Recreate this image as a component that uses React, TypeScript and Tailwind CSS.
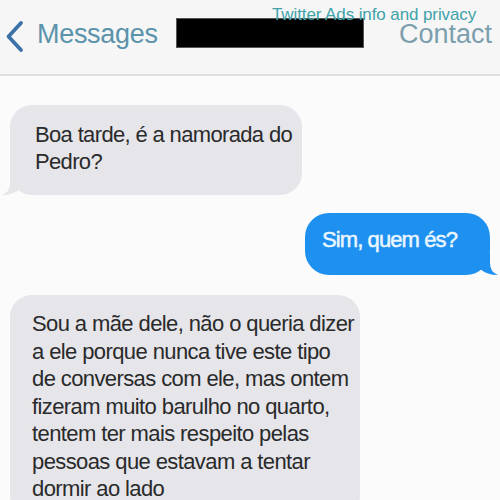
import React from "react";

const bubbleFont = "font-['Liberation_Sans',Arial,sans-serif]";

const LeftTail = () => (
  <svg
    className="absolute left-[-8px] bottom-0"
    width="22"
    height="22"
    viewBox="0 0 22 22"
  >
    <path d="M8 0 V10 Q8 19 0 22 Q11 22 18 16 V0 Z" fill="#e5e5ea" />
  </svg>
);

const RightTail = () => (
  <svg
    className="absolute right-[-8px] bottom-0"
    width="22"
    height="22"
    viewBox="0 0 22 22"
  >
    <path d="M14 0 V10 Q14 19 22 22 Q11 22 4 16 V0 Z" fill="#1e90f0" />
  </svg>
);

export default function App() {
  return (
    <div className="w-[500px] h-[500px] overflow-hidden bg-[#fbfbfb] font-['Liberation_Sans',Arial,sans-serif]">
      {/* top bar */}
      <div className="relative h-[76px] bg-[#f6f6f6] border-b-2 border-[#e0e0e0] flex items-center">
        <svg
          className="ml-[5px] mt-[-1px]"
          width="19"
          height="33"
          viewBox="0 0 19 33"
        >
          <path
            d="M16 3 L3.5 16.5 L16 30"
            fill="none"
            stroke="#3b72a8"
            strokeWidth="3.8"
            strokeLinecap="round"
            strokeLinejoin="round"
          />
        </svg>
        <span className="ml-[13px] text-[27px] text-[#5a93ab] tracking-[-0.3px] mt-[-6px]">
          Messages
        </span>
        <div className="ml-[18px] w-[188px] h-[30px] bg-black border border-[#555] mt-[-8px]" />
        <span className="ml-auto mr-[8px] text-[27px] text-[#7c9fae] mt-[-6px]">
          Contact
        </span>
        <span className="absolute left-[272px] top-[5px] text-[17px] leading-[20px] tracking-[-0.1px] text-[#3fa2a9]">
          Twitter Ads info and privacy
        </span>
      </div>

      {/* conversation */}
      <div className={`flex flex-col pt-[29px] ${bubbleFont}`}>
        <div className="relative ml-[10px] w-[292px] h-[90px] rounded-[22px] bg-[#e5e5ea] pl-[25px] pt-[16px] text-[22px] leading-[27px] tracking-[-0.65px] text-[#2a2a2a] whitespace-nowrap">
          Boa tarde, é a namorada do
          <br />
          Pedro?
          <LeftTail />
        </div>

        <div className="relative self-end mr-[10px] mt-[18px] w-[185px] h-[62px] rounded-[24px] bg-[#1e90f0] pl-[17px] pt-[13px] text-[22px] leading-[28px] tracking-[-0.9px] [-webkit-text-stroke:0.5px_#eaf6ff] text-[#eaf6ff] whitespace-nowrap">
          Sim, quem és?
          <RightTail />
        </div>

        <div className="relative ml-[10px] mt-[20px] w-[350px] rounded-[22px] bg-[#e5e5ea] pl-[22px] pt-[15px] pb-[14px] text-[22px] leading-[27.5px] tracking-[-0.6px] text-[#2a2a2a] whitespace-nowrap">
          Sou a mãe dele, não o queria dizer
          <br />
          a ele porque nunca tive este tipo
          <br />
          de conversas com ele, mas ontem
          <br />
          fizeram muito barulho no quarto,
          <br />
          tentem ter mais respeito pelas
          <br />
          pessoas que estavam a tentar
          <br />
          dormir ao lado
        </div>
      </div>
    </div>
  );
}
